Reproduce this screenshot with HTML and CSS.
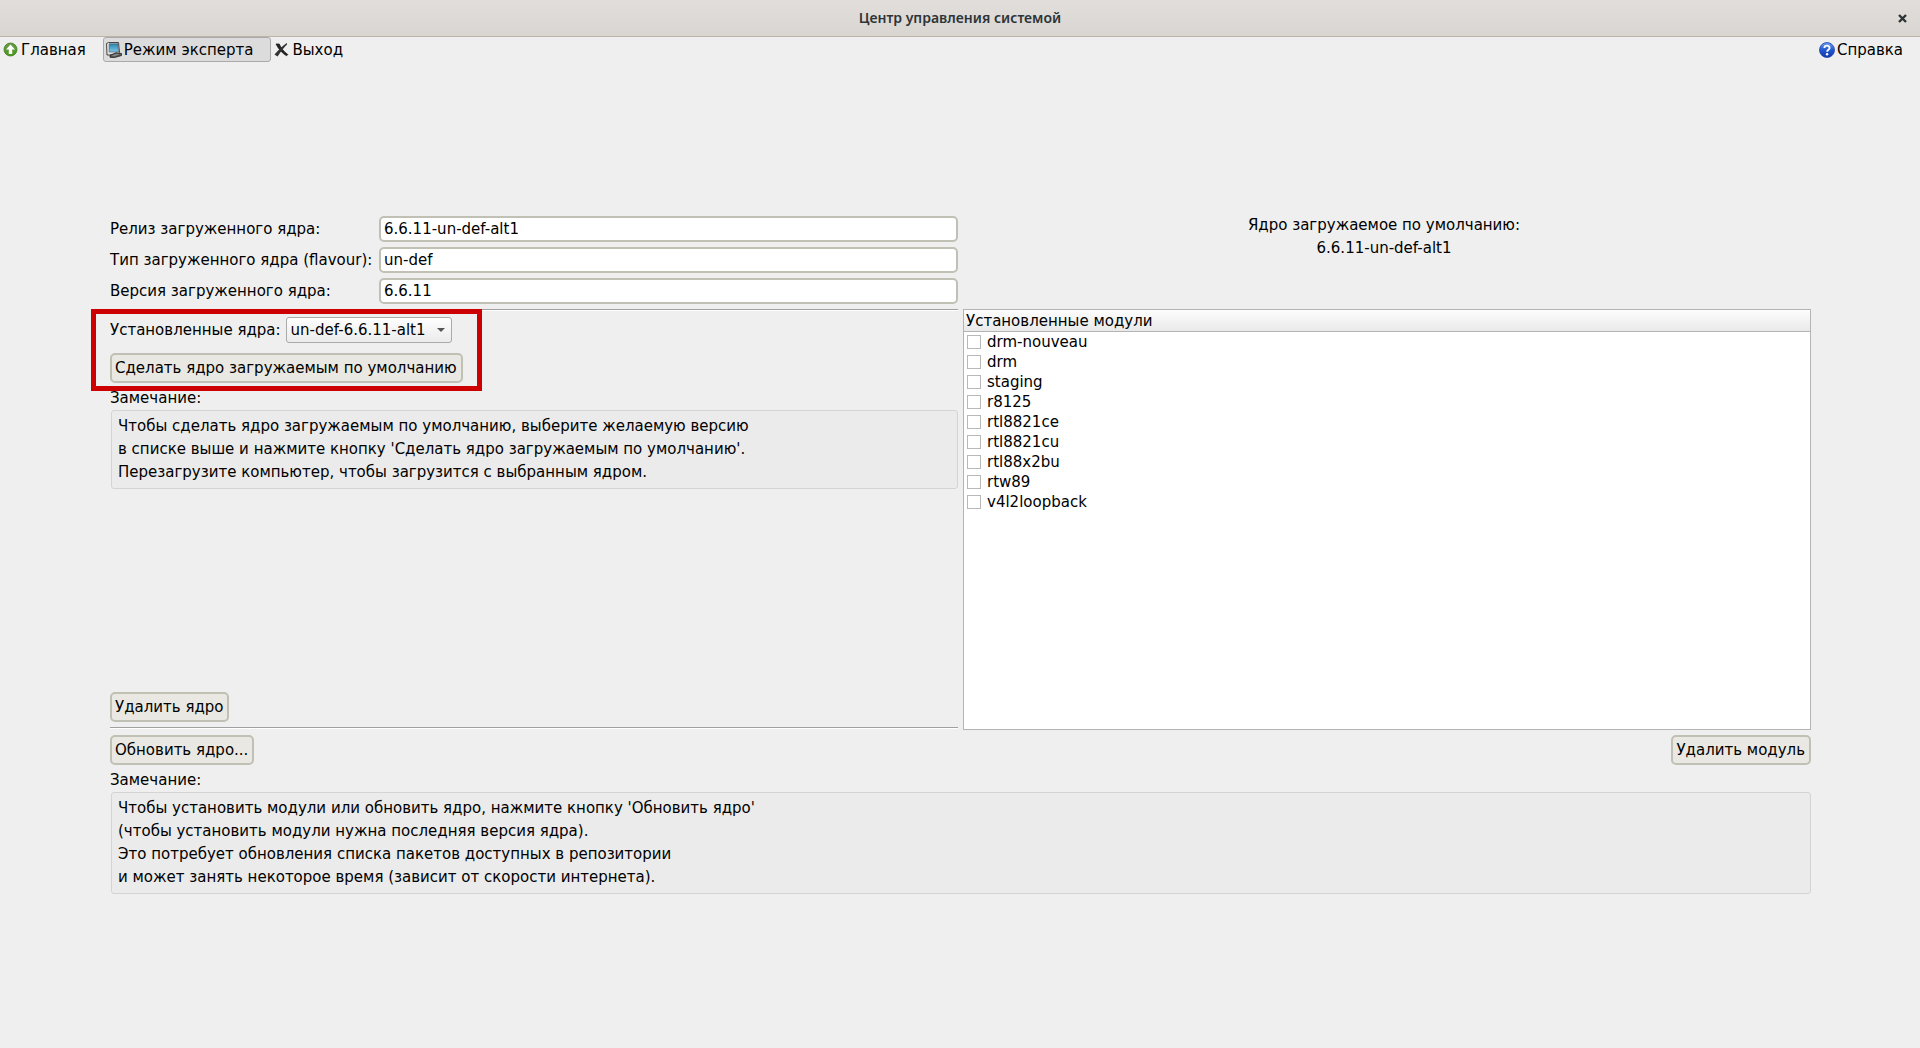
FILE: index.html
```html
<!DOCTYPE html>
<html lang="ru">
<head>
<meta charset="utf-8">
<title>Центр управления системой</title>
<link rel="stylesheet" href="styles.css">
</head>
<body>
<header class="titlebar">
  <h1 class="titlebar-text">Центр управления системой</h1>
  <button class="close" type="button" aria-label="Закрыть">
    <svg width="9" height="9" viewBox="0 0 9 9"><path d="M1 1L8 8M8 1L1 8" stroke="#2e3436" stroke-width="2.4"/></svg>
  </button>
</header>
<nav class="toolbar">
  <button class="tool" type="button">
    <svg class="icon" width="16" height="16" viewBox="0 0 16 16">
      <defs><linearGradient id="green" x1="0" y1="0" x2="0" y2="1"><stop offset="0" stop-color="#6c9a48"/><stop offset="1" stop-color="#4a9a1c"/></linearGradient></defs>
      <circle cx="7.500" cy="7.500" r="6.500" fill="url(#green)" stroke="#3c7a1c" stroke-width=".8"/>
      <path d="M7.500 2.600L12 7.400H9.200V12H5.800V7.400H3Z" fill="#fff"/>
    </svg>
    Главная
  </button>
  <button class="tool tool-active" type="button" aria-pressed="true">
    <svg class="icon" width="16" height="16" viewBox="0 0 16 16">
      <defs><linearGradient id="screen" x1="0" y1="0" x2="0" y2="1"><stop offset="0" stop-color="#2c83ad"/><stop offset="1" stop-color="#7cc8ea"/></linearGradient></defs>
      <path d="M.5 1.500L2.500 .5H12.500L13.500 10.500L11 13H1Z" fill="#e4e4e0" stroke="#333" stroke-width=".9"/>
      <path d="M3.200 1.800H12L12.500 10H3.200Z" fill="url(#screen)" stroke="#456" stroke-width=".6"/>
      <path d="M4 13.300L10 10.800L15.500 11.500V13.500L8.500 15.600L4 15.300Z" fill="#555" stroke="#222" stroke-width=".8"/>
      <path d="M5.500 13.500L10.500 11.700L14 12.200L8.500 14.200Z" fill="#888"/>
    </svg>
    Режим эксперта
  </button>
  <button class="tool" type="button">
    <svg class="icon" width="16" height="16" viewBox="0 0 16 16">
      <path d="M2 2H5.200C6.800 5.500 9.500 9.500 13.800 12.600L12.600 13.800C8.500 11.500 4.500 7 2 2Z" fill="#222" stroke="#222" stroke-width=".8"/>
      <path d="M12.800 1.800C9.500 5 6.500 9 3.400 13.600L1.400 12.400C4 9.500 8.500 4.500 12.800 1.800Z" fill="#333" stroke="#333" stroke-width="1.200"/>
    </svg>
    Выход
  </button>
  <button class="tool tool-help" type="button">
    <svg class="icon" width="16" height="16" viewBox="0 0 16 16">
      <defs><linearGradient id="blue" x1="0" y1="0" x2="0" y2="1"><stop offset="0" stop-color="#6f9cf0"/><stop offset=".5" stop-color="#2258d0"/><stop offset="1" stop-color="#1238a4"/></linearGradient></defs>
      <circle cx="8" cy="8" r="7.500" fill="url(#blue)" stroke="#1b45b0" stroke-width=".8"/>
      <path d="M5.400 6C5.400 2.900 10.600 2.900 10.600 5.900C10.600 7.800 8.100 7.700 8.100 9.800" fill="none" stroke="#fff" stroke-width="1.800"/>
      <circle cx="8.100" cy="12.200" r="1.200" fill="#fff"/>
    </svg>
    Справка
  </button>
</nav>
<main class="content">
  <section class="summary">
    <div class="fields">
      <label for="release">Релиз загруженного ядра:</label>
      <input class="field" id="release" type="text" value="6.6.11-un-def-alt1" readonly>
      <label for="flavour">Тип загруженного ядра (flavour):</label>
      <input class="field" id="flavour" type="text" value="un-def" readonly>
      <label for="version">Версия загруженного ядра:</label>
      <input class="field" id="version" type="text" value="6.6.11" readonly>
    </div>
    <p class="default-kernel">Ядро загружаемое по умолчанию:<br>6.6.11-un-def-alt1</p>
  </section>
  <section class="manage">
    <div class="kernels">
      <div class="chooser">
        <div class="chooser-row">
          <label for="kernel">Установленные ядра:</label>
          <span class="select-wrap">
            <select class="select" id="kernel"><option>un-def-6.6.11-alt1</option></select>
            <svg class="arrow" width="8" height="4" viewBox="0 0 8 4"><path d="M0 0H8L4 4Z" fill="#555"/></svg>
          </span>
        </div>
        <button class="button" type="button">Сделать ядро загружаемым по умолчанию</button>
        <span class="highlight"></span>
      </div>
      <p class="note-title">Замечание:</p>
      <p class="note">Чтобы сделать ядро загружаемым по умолчанию, выберите желаемую версию<br>в списке выше и нажмите кнопку 'Сделать ядро загружаемым по умолчанию'.<br>Перезагрузите компьютер, чтобы загрузится с выбранным ядром.</p>
      <button class="button button-remove" type="button">Удалить ядро</button>
    </div>
    <div class="modules">
      <table class="module-table">
        <thead><tr><th>Установленные модули</th></tr></thead>
        <tbody>
          <tr><td><label class="module"><input class="check" type="checkbox">drm-nouveau</label></td></tr>
          <tr><td><label class="module"><input class="check" type="checkbox">drm</label></td></tr>
          <tr><td><label class="module"><input class="check" type="checkbox">staging</label></td></tr>
          <tr><td><label class="module"><input class="check" type="checkbox">r8125</label></td></tr>
          <tr><td><label class="module"><input class="check" type="checkbox">rtl8821ce</label></td></tr>
          <tr><td><label class="module"><input class="check" type="checkbox">rtl8821cu</label></td></tr>
          <tr><td><label class="module"><input class="check" type="checkbox">rtl88x2bu</label></td></tr>
          <tr><td><label class="module"><input class="check" type="checkbox">rtw89</label></td></tr>
          <tr><td><label class="module"><input class="check" type="checkbox">v4l2loopback</label></td></tr>
        </tbody>
      </table>
    </div>
  </section>
  <section class="actions">
    <div class="action-row">
      <button class="button" type="button">Обновить ядро...</button>
      <button class="button" type="button">Удалить модуль</button>
    </div>
    <p class="note-title">Замечание:</p>
    <p class="note">Чтобы установить модули или обновить ядро, нажмите кнопку 'Обновить ядро'<br>(чтобы установить модули нужна последняя версия ядра).<br>Это потребует обновления списка пакетов доступных в репозитории<br>и может занять некоторое время (зависит от скорости интернета).</p>
  </section>
</main>
</body>
</html>
```
FILE: styles.css
```css
* { box-sizing: border-box; }
body {
  margin: 0;
  min-height: 100vh;
  display: flex;
  flex-direction: column;
  background: #efefef;
  color: #000;
  font: 15px/18px "DejaVu Sans", sans-serif;
}
p { margin: 0; }
button, input, select { font: inherit; color: inherit; margin: 0; }

.titlebar {
  display: grid;
  grid-template-columns: 1fr auto 1fr;
  align-items: center;
  height: 37px;
  padding: 0 13px;
  background: linear-gradient(#e1dedb, #d9d6d2);
  border-bottom: 1px solid #bfb2a6;
}
.titlebar-text {
  grid-column: 2;
  margin: 0;
  font: 600 14px/20px "Noto Sans", sans-serif;
  color: #2e3436;
}
.close {
  justify-self: end;
  display: flex;
  padding: 0;
  border: 0;
  background: none;
}

.toolbar { display: flex; height: 25px; }
.tool {
  display: flex;
  align-items: center;
  gap: 2px;
  padding: 0 16px 0 2px;
  border: 1px solid transparent;
  border-radius: 3px;
  background: none;
}
.tool-active { padding-right: 17px; background: #dcdcdc; border-color: #aaa; }
.tool-help { margin-left: auto; }
.icon { flex: none; }

.content {
  flex: 1;
  display: flex;
  flex-direction: column;
  justify-content: center;
  gap: 5px;
  padding: 0 109px 4px 110px;
}
.summary, .manage {
  display: grid;
  grid-template-columns: 1fr 1fr;
  gap: 5px;
}
.fields {
  display: grid;
  grid-template-columns: minmax(264px, auto) 1fr;
  align-items: center;
  gap: 5px;
  padding-top: 3px;
}
.field {
  width: 100%;
  height: 26px;
  padding: 0 3px;
  border: 2px solid #c0c0b4;
  border-radius: 5px;
  background: #fff;
}
.default-kernel { padding: 1px 6px 0 0; line-height: 23px; text-align: center; }

.kernels {
  display: flex;
  flex-direction: column;
  align-items: flex-start;
  margin-bottom: 2px;
  padding: 7px 0 5px;
  border-top: 1px solid #a0a0a0;
  border-bottom: 1px solid #a0a0a0;
  box-shadow: inset 0 1px #fff, 0 1px #fff;
}
.chooser {
  position: relative;
  display: flex;
  flex-direction: column;
  align-items: flex-start;
  gap: 10px;
}
.highlight {
  position: absolute;
  inset: -8px -19px -8px -19px;
  border: 5px solid #c00;
  pointer-events: none;
}
.chooser-row { display: flex; align-items: center; gap: 5px; }
.select-wrap { position: relative; display: flex; }
.select {
  appearance: none;
  height: 26px;
  padding: 0 25px 0 4px;
  border: 1px solid #aaa;
  border-radius: 3px;
  background: linear-gradient(#fefefe, #ebebeb);
}
.arrow { position: absolute; right: 7px; top: 11px; pointer-events: none; }
.button {
  height: 30px;
  padding: 0 4px 0 3px;
  border: 2px solid #c0c0b4;
  border-radius: 5px;
  background: #e9e8e2;
}
.button-remove { margin-top: auto; }
.note-title { margin: 6px 0 3px; }
.note {
  align-self: stretch;
  margin-left: 1px;
  padding: 4px 6px;
  border: 1px solid #d4d4d4;
  border-radius: 3px;
  background: #ebebeb;
  line-height: 23px;
}

.modules {
  min-height: 421px;
  background: #fff;
  border: 1px solid #b4b4b4;
}
.module-table { width: 100%; border-collapse: collapse; }
.module-table th {
  height: 22px;
  padding: 2px 2px 0;
  border-bottom: 1px solid #b4b4b4;
  background: linear-gradient(#fdfdfd, #e9e9e9);
  font-weight: normal;
  text-align: left;
}
.module-table td { padding: 0 3px; }
.module { display: flex; align-items: center; gap: 6px; height: 20px; }
.check {
  appearance: none;
  width: 14px;
  height: 14px;
  border: 1px solid #b8b8b8;
  background: #fff;
}

.action-row { display: flex; justify-content: space-between; }
```
